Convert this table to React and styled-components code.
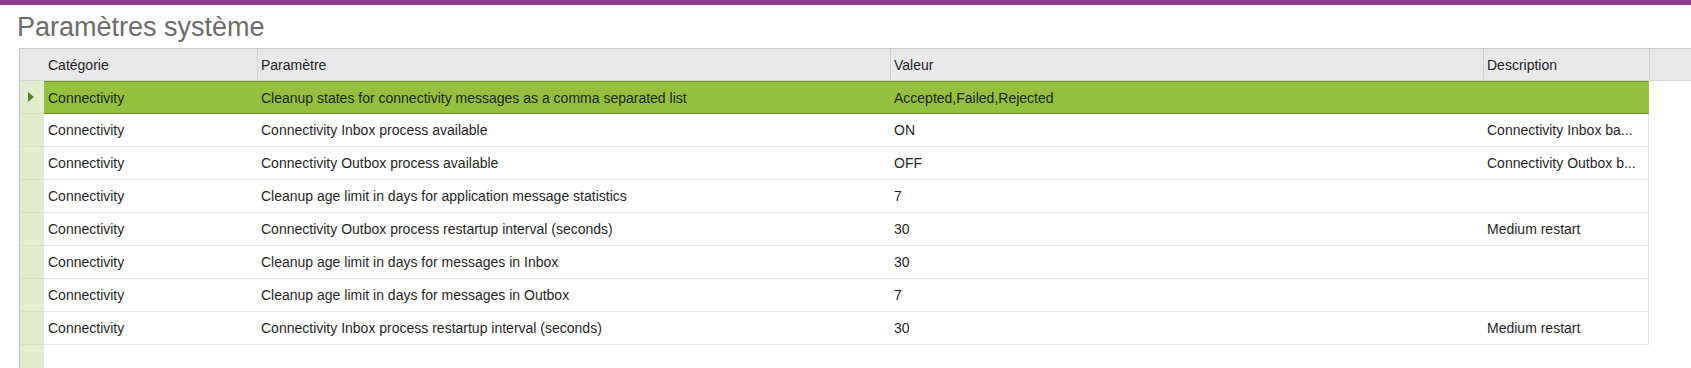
import React from "react";
import styled, { createGlobalStyle, css } from "styled-components";

const rows = [
  {
    category: "Connectivity",
    parameter: "Cleanup states for connectivity messages as a comma separated list",
    value: "Accepted,Failed,Rejected",
    description: "",
  },
  {
    category: "Connectivity",
    parameter: "Connectivity Inbox process available",
    value: "ON",
    description: "Connectivity Inbox ba...",
  },
  {
    category: "Connectivity",
    parameter: "Connectivity Outbox process available",
    value: "OFF",
    description: "Connectivity Outbox b...",
  },
  {
    category: "Connectivity",
    parameter: "Cleanup age limit in days for application message statistics",
    value: "7",
    description: "",
  },
  {
    category: "Connectivity",
    parameter: "Connectivity Outbox process restartup interval (seconds)",
    value: "30",
    description: "Medium restart",
  },
  {
    category: "Connectivity",
    parameter: "Cleanup age limit in days for messages in Inbox",
    value: "30",
    description: "",
  },
  {
    category: "Connectivity",
    parameter: "Cleanup age limit in days for messages in Outbox",
    value: "7",
    description: "",
  },
  {
    category: "Connectivity",
    parameter: "Connectivity Inbox process restartup interval (seconds)",
    value: "30",
    description: "Medium restart",
  },
];

const columns = ["Catégorie", "Paramètre", "Valeur", "Description"];

const App = () => {
  const selected = 0;

  return (
    <>
      <GlobalStyle />
      <Page>
        <TopBar />
        <Title>Paramètres système</Title>
        <Grid>
          <Header>
            <HeaderCell />
            {columns.map((col, i) => (
              <HeaderCell key={col} $divider={i > 0}>
                {col}
              </HeaderCell>
            ))}
            <HeaderCell $divider />
          </Header>
          <Body>
            <Indicator>
              {rows.map((row, i) => (
                <IndicatorCell key={i}>{i === selected && <Arrow />}</IndicatorCell>
              ))}
            </Indicator>
            <Rows>
              {rows.map((row, i) => (
                <Row key={i} $selected={i === selected}>
                  <Cell>{row.category}</Cell>
                  <Cell>{row.parameter}</Cell>
                  <Cell>{row.value}</Cell>
                  <Cell>{row.description}</Cell>
                </Row>
              ))}
            </Rows>
          </Body>
        </Grid>
      </Page>
    </>
  );
};

export default App;

const GlobalStyle = createGlobalStyle`
  html, body {
    margin: 0;
    padding: 0;
    background: #ffffff;
  }
  body {
    font-family: "Liberation Sans", Arial, sans-serif;
  }
  * {
    box-sizing: border-box;
  }
`;

const Page = styled.div`
  display: flex;
  flex-direction: column;
  height: 100vh;
  overflow: hidden;
`;

const TopBar = styled.div`
  height: 5px;
  background-color: #8a3f8e;
  flex-shrink: 0;
`;

const Title = styled.h1`
  margin: 7px 0 0 17px;
  font-size: 27px;
  line-height: 31px;
  font-weight: normal;
  color: #6b6b6b;
  flex-shrink: 0;
`;

const Grid = styled.div`
  display: flex;
  flex-direction: column;
  flex: 1;
  margin: 5px 0 0 19px;
  border-left: 1px solid #c6c6c6;
`;

const Header = styled.div`
  display: grid;
  grid-template-columns: 24px 213px 633px 593px 166px 1fr;
  height: 33px;
  background-color: #e9e9eb;
  border-top: 1px solid #c9c9c9;
  border-bottom: 1px solid #d6d6d6;
  flex-shrink: 0;
`;

const HeaderCell = styled.div`
  display: flex;
  align-items: center;
  padding: 0 4px;
  font-size: 14px;
  color: #222222;
  white-space: nowrap;
  overflow: hidden;
  ${(p) =>
    p.$divider &&
    css`
      border-left: 1px solid #d0d0d0;
      padding-left: 3px;
    `}
`;

const Body = styled.div`
  display: flex;
  flex: 1;
`;

const Indicator = styled.div`
  display: flex;
  flex-direction: column;
  width: 24px;
  background-color: #e2ecce;
`;

const IndicatorCell = styled.div`
  display: flex;
  align-items: center;
  height: 33px;
  padding-left: 8px;
  border-bottom: 1px solid #d3e2b7;
`;

const Arrow = styled.span`
  width: 0;
  height: 0;
  border-left: 6px solid #55861f;
  border-top: 5px solid transparent;
  border-bottom: 5px solid transparent;
`;

const Rows = styled.div`
  display: flex;
  flex-direction: column;
  width: 1605px;
`;

const Row = styled.div`
  display: grid;
  grid-template-columns: 213px 633px 593px 165px;
  height: 33px;
  border-right: 1px solid #e6e6e6;
  border-bottom: 1px solid #e6e6e6;
  color: #1f1f1f;
  ${(p) =>
    p.$selected &&
    css`
      background-color: #93c13d;
      border-top: 1px solid #6b8f2a;
      border-bottom: 1px solid #6b8f2a;
      border-right-color: #93c13d;
    `}
`;

const Cell = styled.div`
  display: flex;
  align-items: center;
  padding: 0 4px;
  font-size: 14px;
  white-space: nowrap;
  overflow: hidden;
`;
